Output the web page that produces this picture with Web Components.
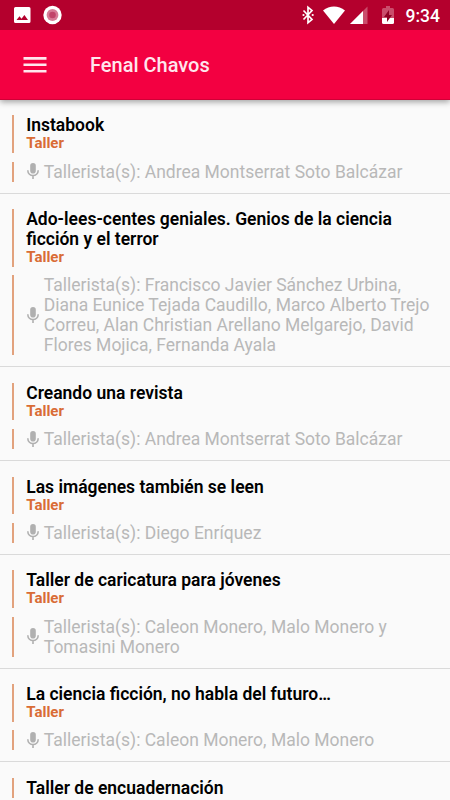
<!DOCTYPE html>
<html lang="es">
<head>
	<meta charset="utf-8">
	<title>Fenal Chavos</title>
	<style>
		html, body {
			margin : 0;
			height : 100%;
		}

		body {
			overflow    : hidden;
			background  : #fafafa;
			font-family : Roboto, sans-serif;
		}
	</style>
</head>
<body>
<fenal-app>
	<status-bar slot="header">9:34</status-bar>
	<app-bar slot="header">Fenal Chavos</app-bar>

	<event-item kind="Taller">Instabook
		<span slot="speakers">Tallerista(s): Andrea Montserrat Soto Balcázar</span>
	</event-item>
	<event-item kind="Taller">Ado-lees-centes geniales. Genios de la ciencia ficción y el terror
		<span slot="speakers">Tallerista(s): Francisco Javier Sánchez Urbina, Diana Eunice Tejada Caudillo, Marco Alberto Trejo Correu, Alan Christian Arellano Melgarejo, David Flores Mojica, Fernanda Ayala</span>
	</event-item>
	<event-item kind="Taller">Creando una revista
		<span slot="speakers">Tallerista(s): Andrea Montserrat Soto Balcázar</span>
	</event-item>
	<event-item kind="Taller">Las imágenes también se leen
		<span slot="speakers">Tallerista(s): Diego Enríquez</span>
	</event-item>
	<event-item kind="Taller">Taller de caricatura para jóvenes
		<span slot="speakers">Tallerista(s): Caleon Monero, Malo Monero y Tomasini Monero</span>
	</event-item>
	<event-item kind="Taller">La ciencia ficción, no habla del futuro…
		<span slot="speakers">Tallerista(s): Caleon Monero, Malo Monero</span>
	</event-item>
	<event-item>Taller de encuadernación</event-item>
</fenal-app>

<script>
	// Attach an open shadow root and fill it with the given markup.
	function render(host, html) {
		host.attachShadow({ mode: 'open' }).innerHTML = html;
	}

	class FenalApp extends HTMLElement {
		constructor() {
			super();
			render(this, `
				<style>
					:host {
						display        : flex;
						flex-direction : column;
						height         : 100vh;
						overflow       : hidden;
					}
					header {
						flex       : none;
						position   : relative;
						z-index    : 1;
						box-shadow : 0 2px 6px rgba(0, 0, 0, .36);
					}
					main {
						flex       : 1;
						min-height : 0;
						overflow   : hidden;
					}
				</style>
				<header><slot name="header"></slot></header>
				<main><slot></slot></main>
			`);
		}
	}

	class StatusBar extends HTMLElement {
		constructor() {
			super();
			render(this, `
				<style>
					:host {
						display     : flex;
						align-items : center;
						box-sizing  : border-box;
						height      : 30px;
						padding     : 0 10px 0 14px;
						background  : #b4002d;
						color       : #fff;
						font-size   : 17.500px;
						font-weight : 500;
						line-height : 30px;
					}
					svg { display: block; flex: none; fill: currentColor; }
					.photo { margin-right: 12px; }
					.bluetooth { margin-left: auto; margin-right: 9px; }
					.wifi { margin-right: 5px; }
					.signal { margin-right: 14px; }
					.battery { margin-right: 12px; }
					.time { padding-top: 2px; }
				</style>
				<svg class="photo" width="17" height="30" viewBox="0 0 17 30">
					<path fill-rule="evenodd" d="M1.500 7h13.500a1.500 1.500 0 0 1 1.500 1.500v13a1.500 1.500 0 0 1-1.500 1.500H1.500A1.500 1.500 0 0 1 0 21.500v-13A1.500 1.500 0 0 1 1.500 7zM2.500 20H14l-3.600-5-2.900 3.700-2-2.400z"/>
				</svg>
				<svg width="19" height="30" viewBox="0 0 19 30">
					<circle cx="9.500" cy="15" r="9.200"/>
					<circle cx="9.500" cy="15" r="5.900" fill="#d77b96"/>
					<circle cx="9.500" cy="15" r="3.300" fill="#c14469"/>
				</svg>
				<svg class="bluetooth" width="12" height="30" viewBox="0 0 12 30">
					<path d="M1.500 10.500l8.500 9-4 3.300V7.200l4 3.300-8.500 9" fill="none" stroke="currentColor" stroke-width="1.700"/>
					<circle cx="1.500" cy="15" r="1.100"/>
					<circle cx="10.700" cy="15" r="1.100"/>
				</svg>
				<svg class="wifi" width="22" height="30" viewBox="0 0 22 30">
					<path d="M0 10.500C6.500 5 15.500 5 22 10.500L11 24z"/>
				</svg>
				<svg class="signal" width="18" height="30" viewBox="0 0 18 30">
					<path d="M17.500 6.500V24H0z" opacity=".3"/>
					<path d="M13 11v13H0z"/>
				</svg>
				<svg class="battery" width="12" height="30" viewBox="0 0 12 30">
					<path d="M4 6h4v2h2.500q1.500 0 1.500 1.500V18H0V9.500Q0 8 1.500 8H4z" opacity=".3"/>
					<path d="M0 18h12v4.500q0 1.500-1.500 1.500h-9Q0 24 0 22.500z"/>
					<path d="M7 10v5h3l-5 7v-5H2z" fill="#8e0024"/>
				</svg>
				<span class="time"><slot></slot></span>
			`);
		}
	}

	class AppBar extends HTMLElement {
		constructor() {
			super();
			render(this, `
				<style>
					:host {
						display       : flex;
						align-items   : center;
						gap           : 43px;
						box-sizing    : border-box;
						height        : 70px;
						padding-left  : 23px;
						border-bottom : 1px solid #cf0036;
						background    : #f30041;
						color         : #ffe6ed;
						font-size     : 20px;
						font-weight   : 500;
					}
					svg { display: block; fill: currentColor; }
				</style>
				<svg width="24" height="17" viewBox="0 0 24 17">
					<path d="M.500 1h23v2.700H.500zM.500 7.400h23v2.700H.500zM.500 13.900h23v2.700H.500z"/>
				</svg>
				<slot></slot>
			`);
		}
	}

	class EventItem extends HTMLElement {
		constructor() {
			super();
			render(this, `
				<style>
					:host {
						display       : block;
						box-sizing    : border-box;
						padding       : 15.400px 12px 11.100px;
						border-bottom : 1px solid #dadada;
					}
					.title, .speakers {
						position     : relative;
						padding-left : 14.200px;
						line-height  : 20px;
						font-size    : 17.500px;
					}
					/* the coloured rule at the left of each block */
					.title::before, .speakers::before {
						content    : '';
						position   : absolute;
						left       : 0;
						top        : 0;
						bottom     : 0;
						width      : 2px;
						background : #e2a27d;
					}
					.title {
						color       : #000;
						font-weight : 600;
					}
					.kind {
						color       : #d96c36;
						font-size   : 15px;
						font-weight : 700;
						line-height : 17.500px;
					}
					.speakers {
						display     : flex;
						align-items : center;
						margin-top  : 8.750px;
						color       : #b8b8b8;
					}
					svg {
						flex   : none;
						margin : 0 4.300px 0 1.300px;
						fill   : #b0b0b0;
					}
					[hidden] { display: none; }
				</style>
				<div class="title">
					<slot></slot>
					<div class="kind"></div>
				</div>
				<div class="speakers">
					<svg width="12" height="17" viewBox="0 0 12 17">
						<rect x="3.200" y="0" width="5.600" height="10.500" rx="2.800"/>
						<path d="M.800 7.200c0 7 10.400 7 10.400 0M6 12.300V16" fill="none" stroke="#b0b0b0" stroke-width="1.600"/>
					</svg>
					<slot name="speakers"></slot>
				</div>
			`);
		}

		connectedCallback() {
			this.shadowRoot.querySelector('.kind').textContent = this.getAttribute('kind');
			this.shadowRoot.querySelector('.speakers').hidden = !this.querySelector('[slot=speakers]');
		}
	}

	customElements.define('fenal-app', FenalApp);
	customElements.define('status-bar', StatusBar);
	customElements.define('app-bar', AppBar);
	customElements.define('event-item', EventItem);
</script>
</body>
</html>
